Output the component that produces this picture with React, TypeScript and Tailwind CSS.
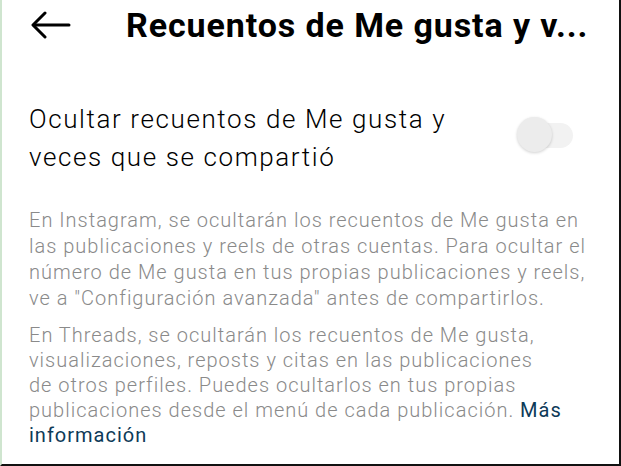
import React from 'react';

export default function App() {
  return (
    <div className="w-[621px] h-[466px] bg-white border-l-2 border-l-[#cfe5cf] border-r-2 border-r-[#111] border-b-2 border-b-[#111] overflow-hidden font-['Roboto',sans-serif]">
      {/* Header */}
      <div className="flex items-center h-[50px]">
        <button className="ml-[28px] w-[42px] h-[30px] flex items-center justify-center text-black">
          <svg width="40" height="28" viewBox="0 0 40 28" fill="none" stroke="currentColor" strokeWidth="3" strokeLinecap="round" strokeLinejoin="round">
            <path d="M38 14H3" />
            <path d="M14 2L2 14l12 12" />
          </svg>
        </button>
        <h1 className="ml-[54px] text-[34px] font-bold text-black tracking-[0.9px] whitespace-nowrap">
          Recuentos de Me gusta y v...
        </h1>
      </div>

      {/* Setting row */}
      <div className="flex items-center justify-between pl-[27px] pr-[46px] mt-[50px]">
        <p className="text-[26px] font-light leading-[38px] text-black tracking-[1.6px] whitespace-nowrap">
          Ocultar recuentos de Me gusta y
          <br />
          veces que se compartió
        </p>
        <div className="relative w-[56px] h-[36px] mb-[6px]">
          <div className="absolute right-0 top-[6px] w-[38px] h-[25px] rounded-full bg-[#f2f2f2]" />
          <div className="absolute left-0 top-0 w-[35px] h-[35px] rounded-full bg-[#ececec] shadow-[0_1px_3px_rgba(0,0,0,0.18)]" />
        </div>
      </div>

      {/* Descriptions */}
      <div className="pl-[27px] pr-2 mt-[31px] text-[20px] leading-[26px] text-[#8a8a8a] font-light tracking-[1px] whitespace-nowrap">
        <p>
          En Instagram, se ocultarán los recuentos de Me gusta en
          <br />
          las publicaciones y reels de otras cuentas. Para ocultar el
          <br />
          número de Me gusta en tus propias publicaciones y reels,
          <br />
          ve a "Configuración avanzada" antes de compartirlos.
        </p>
        <p className="mt-[12px] leading-[25px]">
          En Threads, se ocultarán los recuentos de Me gusta,
          <br />
          visualizaciones, reposts y citas en las publicaciones
          <br />
          de otros perfiles. Puedes ocultarlos en tus propias
          <br />
          publicaciones desde el menú de cada publicación.{' '}
          <span className="text-[#0d3a58] font-normal">Más</span>
          <br />
          <span className="text-[#0d3a58] font-normal">información</span>
        </p>
      </div>
    </div>
  );
}
